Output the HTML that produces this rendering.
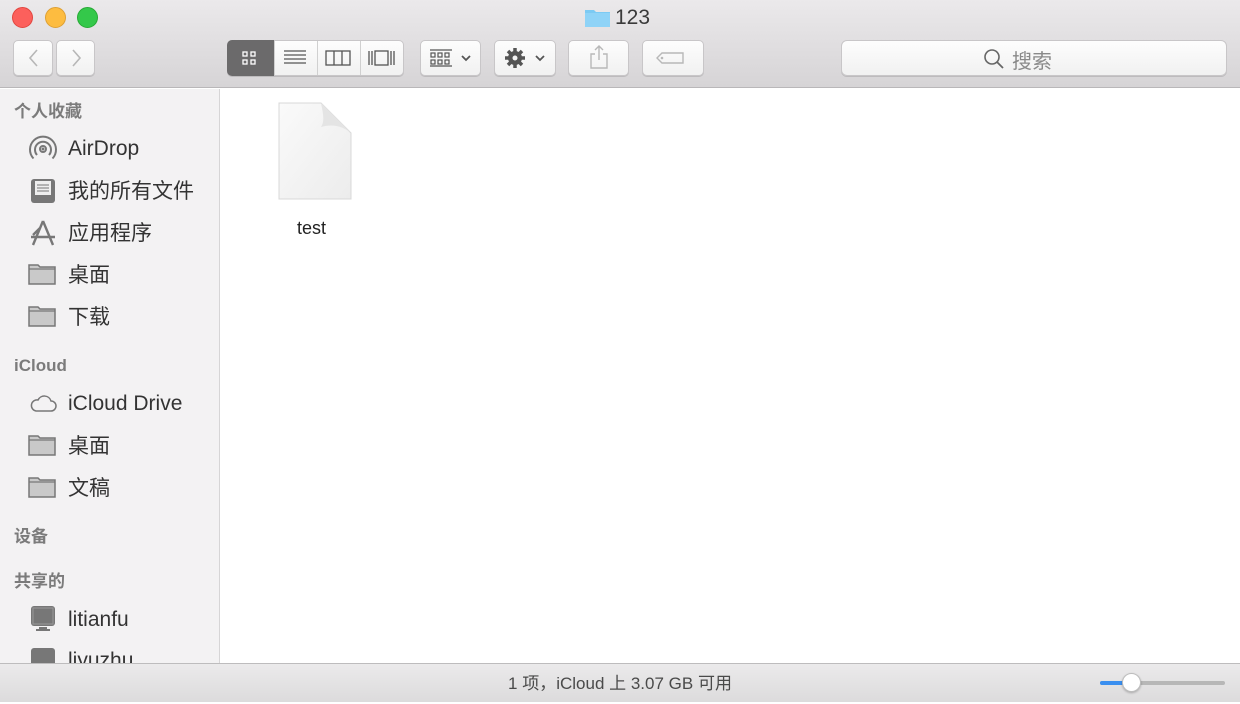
<!DOCTYPE html>
<html><head><meta charset="utf-8"><style>
*{margin:0;padding:0;box-sizing:border-box}
body{width:1240px;height:702px;overflow:hidden;position:relative;font-family:"Liberation Sans","Noto Sans CJK SC",sans-serif;background:#fff}
.a{position:absolute}
.tb{left:0;top:0;width:1240px;height:88px;background:linear-gradient(#ebe9eb,#d6d4d6);border-bottom:1px solid #b9b7b9}
.dot{width:21px;height:21px;border-radius:50%;top:7px}
.btn{top:40px;height:36px;background:linear-gradient(#fdfdfd,#f1f1f1);border:1px solid #c8c6c8;border-radius:5px;box-shadow:0 1px 0 #bdbbbd}
.side{left:0;top:89px;width:220px;height:574px;background:#f3f2f3;border-right:1px solid #d6d5d6;overflow:hidden}
.h{left:14px;font-size:17px;color:#7b7b7b;font-weight:bold}
.it{left:68px;font-size:21px;color:#333}
.ic{left:28px}
.status{left:0;top:663px;width:1240px;height:39px;background:linear-gradient(#ebeaeb,#dcdbdc);border-top:1px solid #bdbcbd;font-size:17px;color:#4a4a4a;text-align:center;line-height:40px}
</style></head><body>
<div class="a tb"></div>
<div class="a dot" style="left:12px;background:#fc605c;border:1px solid #e2463f"></div>
<div class="a dot" style="left:45px;background:#fdbc40;border:1px solid #dea034"></div>
<div class="a dot" style="left:77px;background:#34c84a;border:1px solid #27aa35"></div>
<svg class="a" style="left:585px;top:8px" width="25" height="19"><path d="M0 2h9l2 2h14v15H0z" fill="#7ccaf3"/><rect x="0" y="5" width="25" height="14" fill="#8fd3f7"/></svg>
<div class="a" style="left:615px;top:6px;font-size:21px;color:#3a3a3a">123</div>
<div class="a btn" style="left:13px;width:40px"></div>
<div class="a btn" style="left:56px;width:39px"></div>
<svg class="a" style="left:13px;top:40px" width="82" height="36"><path d="M24 10l-7 8 7 8M60 10l7 8-7 8" stroke="#b7b7b7" stroke-width="1.6" fill="none"/></svg>
<div class="a btn" style="left:227px;width:177px"></div>
<div class="a" style="left:227px;top:40px;width:47px;height:36px;background:#6b6a6b;border-radius:5px 0 0 5px"></div>
<div class="a" style="left:317px;top:41px;width:1px;height:34px;background:#d0d0d0"></div>
<div class="a" style="left:360px;top:41px;width:1px;height:34px;background:#d0d0d0"></div>
<div class="a" style="left:274px;top:41px;width:1px;height:34px;background:#d0d0d0"></div>
<svg class="a" style="left:227px;top:40px" width="177" height="36">
<g fill="none" stroke="#fff" stroke-width="1.3"><rect x="16" y="12" width="4" height="4"/><rect x="24" y="12" width="4" height="4"/><rect x="16" y="20" width="4" height="4"/><rect x="24" y="20" width="4" height="4"/></g>
<g stroke="#555" stroke-width="1.3" fill="none"><path d="M57 11h22M57 15h22M57 19h22M57 23h22"/><rect x="99" y="11" width="24" height="14"/><path d="M107 11v14M115 11v14"/><rect x="148" y="11" width="13" height="14"/><path d="M142 11v14M145 11v14M164 11v14M167 11v14"/></g></svg>
<div class="a btn" style="left:420px;width:61px"></div>
<svg class="a" style="left:420px;top:40px" width="61" height="36"><g stroke="#555" stroke-width="1.2" fill="none"><path d="M10 10h22M10 26h22"/><rect x="11" y="13" width="4" height="4"/><rect x="18" y="13" width="4" height="4"/><rect x="25" y="13" width="4" height="4"/><rect x="11" y="20" width="4" height="4"/><rect x="18" y="20" width="4" height="4"/><rect x="25" y="20" width="4" height="4"/><path d="M42 16l4 4 4-4" stroke-width="1.8"/></g></svg>
<div class="a btn" style="left:494px;width:62px"></div>
<svg class="a" style="left:494px;top:40px" width="62" height="36"><circle cx="21" cy="18" r="7" fill="#555"/><g stroke="#555" stroke-width="3.5"><path d="M21 8v20M11 18h20M14 11l14 14M28 11l-14 14"/></g><circle cx="21" cy="18" r="2.5" fill="#f5f5f5"/><path d="M42 16l4 4 4-4" stroke="#555" stroke-width="1.8" fill="none"/></svg>
<div class="a btn" style="left:568px;width:61px"></div>
<svg class="a" style="left:568px;top:40px" width="61" height="36"><path d="M27 14h-4v14h16V14h-4M31 6v14M27 10l4-4 4 4" stroke="#b8b8b8" stroke-width="1.4" fill="none"/></svg>
<div class="a btn" style="left:642px;width:62px"></div>
<svg class="a" style="left:642px;top:40px" width="62" height="36"><path d="M20 13h21v10H20l-5-5z" stroke="#b8b8b8" stroke-width="1.4" fill="none"/><circle cx="20" cy="18" r="1.3" fill="#b8b8b8"/></svg>
<div class="a btn" style="left:841px;width:386px;border-radius:6px"></div>
<svg class="a" style="left:983px;top:48px" width="22" height="22"><circle cx="9" cy="9" r="7" stroke="#666" stroke-width="1.6" fill="none"/><path d="M14 14l6 6" stroke="#666" stroke-width="1.8"/></svg>
<div class="a" style="left:1012px;top:45px;font-size:20px;color:#8a8a8a">搜索</div>

<div class="a side"></div>
<div class="a h" style="top:97px">个人收藏</div>
<div class="a h" style="top:356px">iCloud</div>
<div class="a h" style="top:522px">设备</div>
<div class="a h" style="top:567px">共享的</div>
<div class="a it" style="top:137px">AirDrop</div>
<div class="a it" style="top:175px">我的所有文件</div>
<div class="a it" style="top:217px">应用程序</div>
<div class="a it" style="top:259px">桌面</div>
<div class="a it" style="top:301px">下载</div>
<div class="a it" style="top:392px">iCloud Drive</div>
<div class="a it" style="top:430px">桌面</div>
<div class="a it" style="top:472px">文稿</div>
<div class="a it" style="top:608px">litianfu</div>
<div class="a it" style="top:649px;height:14px;overflow:hidden">liyuzhu</div>
<svg class="a" style="left:28px;top:134px" width="30" height="30"><g fill="none" stroke="#777" stroke-width="2"><circle cx="15" cy="15" r="3"/><path d="M9 21a8 8 0 1 1 12 0M5.5 24.5a13 13 0 1 1 19 0"/></g><circle cx="15" cy="15" r="1.5" fill="#777"/></svg>
<svg class="a" style="left:28px;top:176px" width="30" height="30"><rect x="3" y="3" width="24" height="24" rx="3" fill="#777"/><rect x="7" y="5" width="16" height="14" fill="#eee"/><path d="M9 9h12M9 12h12M9 15h12" stroke="#777"/></svg>
<svg class="a" style="left:28px;top:218px" width="30" height="30"><path d="M15 3L5 27M15 3l10 24M3 19h24M12 10l-7 7" stroke="#777" stroke-width="2.4" fill="none"/></svg>
<svg class="a" width="0" height="0"><defs><g id="f"><path d="M1 4h9l2 2h15v17H1z" fill="#c9c9c9" stroke="#777" stroke-width="1.5"/><path d="M1 8h26" stroke="#777" stroke-width="1.2"/></g></defs></svg>
<svg class="a" style="left:28px;top:261px" width="30" height="28"><use href="#f"/></svg>
<svg class="a" style="left:28px;top:303px" width="30" height="28"><use href="#f"/></svg>
<svg class="a" style="left:28px;top:432px" width="30" height="28"><use href="#f"/></svg>
<svg class="a" style="left:28px;top:474px" width="30" height="28"><use href="#f"/></svg>
<svg class="a" style="left:28px;top:390px" width="30" height="26"><path d="M8 21h15a5 5 0 0 0 0-10 7 7 0 0 0-13-1 5.5 5.5 0 0 0-2 11z" fill="none" stroke="#777" stroke-width="1.5"/></svg>
<svg class="a" style="left:29px;top:605px" width="30" height="28"><rect x="2" y="1" width="24" height="20" rx="3" fill="#777"/><rect x="4" y="3" width="20" height="16" fill="#777" stroke="#999"/><path d="M10 23h8M7 25h14" stroke="#777" stroke-width="2"/></svg>
<svg class="a" style="left:29px;top:647px" width="30" height="16"><rect x="2" y="1" width="24" height="20" rx="3" fill="#777"/></svg>

<svg class="a" style="left:277px;top:102px" width="78" height="100"><defs><linearGradient id="g" x1="0" y1="0" x2="1" y2="1"><stop offset="0" stop-color="#fafafa"/><stop offset="1" stop-color="#ececec"/></linearGradient></defs><path d="M2 1h42l30 30v66H2z" fill="url(#g)" stroke="#d8d8d8"/><path d="M44 1c2 10 4 18 0 24 10-3 20-2 30 6z" fill="#e4e4e4"/></svg>
<div class="a" style="left:297px;top:218px;font-size:18px;color:#222">test</div>

<div class="a status">1 项，iCloud 上 3.07 GB 可用</div>
<div class="a" style="left:1100px;top:681px;width:125px;height:4px;border-radius:2px;background:#b7b7b7"></div>
<div class="a" style="left:1100px;top:681px;width:30px;height:4px;border-radius:2px;background:#3a8ff0"></div>
<div class="a" style="left:1122px;top:673px;width:19px;height:19px;border-radius:50%;background:#fff;border:1px solid #bdbdbd;box-shadow:0 1px 2px rgba(0,0,0,.25)"></div>
</body></html>
